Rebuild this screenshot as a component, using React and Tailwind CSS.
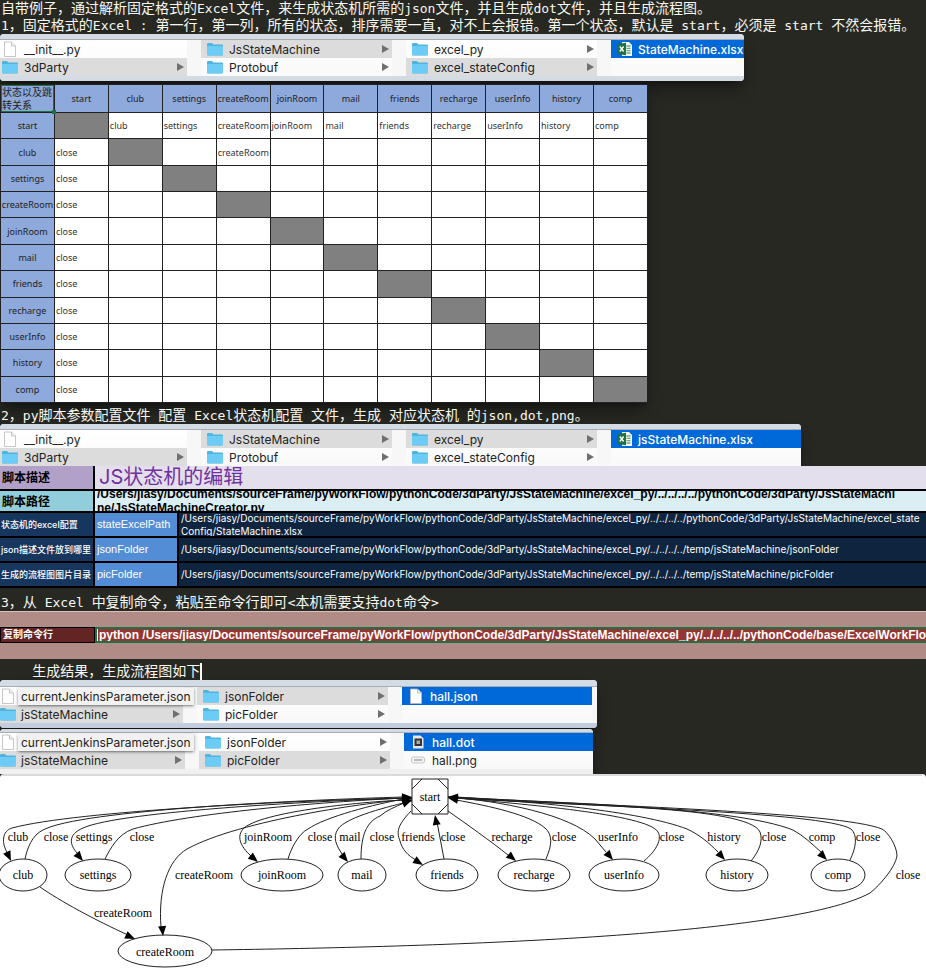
import React from "react";

const STATES = [
  "start", "club", "settings", "createRoom", "joinRoom", "mail",
  "friends", "recharge", "userInfo", "history", "comp",
];

/* Latin runs are set one pixel smaller than the Chinese text around them. */
function EditorLine({ children, className = "" }) {
  const parts = children.split(/([\x20-\x7e]+)/);
  return (
    <p className={`whitespace-pre pl-px font-['DejaVu_Sans_Mono','Noto_Sans_CJK_SC',monospace] text-[14px] leading-[17px] text-[#f8f8f2] ${className}`}>
      {parts.map((part, i) =>
        i % 2 ? <span key={i} className="text-[13px]">{part}</span> : part
      )}
    </p>
  );
}

function FolderIcon() {
  return (
    <svg viewBox="0 0 16 14" className="h-[14px] w-4 shrink-0">
      <path d="M0 2.2Q0 1 1.2 1H5l1.4 1.4h8.400Q16 2.400 16 3.600V12.400Q16 13.400 14.800 13.400H1.200Q0 13.400 0 12.400Z" fill="#4fb4de" />
      <path d="M0 4h16v8.400Q16 13.200 14.800 13.200H1.200Q0 13.200 0 12.400Z" fill="#6cccf6" />
    </svg>
  );
}

function FileIcon() {
  return (
    <svg viewBox="0 0 16 16" className="h-4 w-4 shrink-0">
      <path d="M2.500 1h7l4 4v10.500h-11Z" fill="#fff" stroke="#b9b9b9" strokeWidth="0.800" />
      <path d="M9.500 1v4h4" fill="#eee" stroke="#b9b9b9" strokeWidth="0.800" />
    </svg>
  );
}

function ExcelIcon() {
  return (
    <svg viewBox="0 0 16 16" className="h-4 w-4 shrink-0">
      <path d="M5 1h7l3 3v11H5Z" fill="#f4faf4" />
      <path d="M9.500 5h4M9.500 7.300h4M9.500 9.600h4M9.500 12h4" stroke="#6aa884" strokeWidth="1.300" />
      <path d="M0.500 3 9 1.800v12.400L0.500 13Z" fill="#1e7145" />
      <path d="M2.800 5.500 6.600 10.500M6.600 5.500 2.800 10.500" stroke="#fff" strokeWidth="1.400" />
    </svg>
  );
}

function DotIcon() {
  return (
    <svg viewBox="0 0 16 16" className="h-4 w-4 shrink-0">
      <path d="M3 1.500h7.500l3 3V14.500H3Z" fill="#e8e8e8" />
      <path d="M4.500 4.500h7.500v7.500H4.500Z" fill="#333" />
      <path d="M6.500 6.500h3.500v3.500H6.500Z" fill="#aaa" />
    </svg>
  );
}

function PngIcon() {
  return (
    <svg viewBox="0 0 16 16" className="h-4 w-4 shrink-0">
      <rect x="1.500" y="5" width="13" height="6" rx="2" fill="#f4f4f4" stroke="#c4c4c4" />
      <path d="M4 8h8" stroke="#aaa" strokeWidth="1.300" />
    </svg>
  );
}

const ICONS = { folder: FolderIcon, file: FileIcon, excel: ExcelIcon, dot: DotIcon, png: PngIcon };

function Entry({ icon, name, tone = "", arrow, tip, inset, gap }) {
  const Icon = ICONS[icon];
  const tones = {
    open: "bg-[#dcdcdc] text-[#222]",
    picked: "bg-[#0069d9] font-medium text-white",
    "": "text-[#222]",
  };
  return (
    <li className={`flex h-[18px] items-center whitespace-nowrap text-[12px] leading-[17px] ${inset} ${gap} ${tones[tone]}`}>
      <Icon />
      {tip ? (
        <span className="relative -mx-[3px] bg-[#f2f2f2] px-[3px] shadow shadow-black/40">{name}</span>
      ) : (
        <span>{name}</span>
      )}
      {arrow && (
        <svg viewBox="0 0 7 8" className="mr-[3px] ml-auto h-2 w-[7px] shrink-0">
          <path d="M0 0 7 4 0 8Z" fill="#6f6f6f" />
        </svg>
      )}
    </li>
  );
}

function Finder({ columns, className, title = "h-[6px]", foot = "" }) {
  return (
    <section className={`max-w-full overflow-hidden bg-[#f7f7f7] font-[Inter,sans-serif] shadow-lg shadow-black/40 ${className}`}>
      <div className={`border-b border-[#a9adb1] bg-[#d3dce5] ${title}`} />
      <div className="flex">
        {columns.map((col, i) => (
          <ul key={i} className={`shrink-0 bg-gradient-to-b from-white to-[#f9f9f9] ${col.width} ${i ? "ml-[14px]" : ""}`}>
            {col.items.map((item) => (
              <Entry key={item.name} inset={col.inset} gap={col.gap} {...item} />
            ))}
          </ul>
        ))}
      </div>
      <div className={foot} />
    </section>
  );
}

function sourceColumns(openPy, fileName, lastWidth) {
  return [
    { width: "w-[187px]", inset: "pl-[2px]", gap: "gap-[6px]", items: [
      { icon: "file", name: "__init__.py" },
      { icon: "folder", name: "3dParty", tone: "open", arrow: true },
    ] },
    { width: "w-[191px]", inset: "pl-[6px]", gap: "gap-[6px]", items: [
      { icon: "folder", name: "JsStateMachine", tone: "open", arrow: true },
      { icon: "folder", name: "Protobuf", arrow: true },
    ] },
    { width: "w-[191px]", inset: "pl-[6px]", gap: "gap-[6px]", items: [
      { icon: "folder", name: "excel_py", arrow: true, tone: openPy ? "open" : "" },
      { icon: "folder", name: "excel_stateConfig", arrow: true, tone: openPy ? "" : "open" },
    ] },
    { width: lastWidth, inset: "pl-[6px]", gap: "gap-[5px]", items: [
      { icon: "excel", name: fileName, tone: "picked" },
    ] },
  ];
}

function resultColumns(openPic, firstWidth, lastItems) {
  return [
    { width: firstWidth, inset: "pl-0", gap: "gap-[5px]", items: [
      { icon: "file", name: "currentJenkinsParameter.json", tip: true },
      { icon: "folder", name: "jsStateMachine", tone: "open", arrow: true },
    ] },
    { width: "w-[191px]", inset: "pl-[6px]", gap: "gap-[6px]", items: [
      { icon: "folder", name: "jsonFolder", arrow: true, tone: openPic ? "" : "open" },
      { icon: "folder", name: "picFolder", arrow: true, tone: openPic ? "open" : "" },
    ] },
    { width: "w-[190px]", inset: "pl-[6px]", gap: "gap-[6px]", items: lastItems },
  ];
}

function cellText(row, col) {
  if (row === 0 && col > 0) return STATES[col];
  if (row > 0 && col === 0) return "close";
  if (row === 1 && col === 3) return "createRoom";
  return "";
}

function StateTable() {
  return (
    <table className="h-[319px] w-[648px] max-w-full table-fixed border-collapse overflow-hidden bg-white font-['Noto_Sans','Noto_Sans_CJK_SC',sans-serif] text-[9px] leading-[13px] text-[#333] shadow-lg shadow-black/40">
      <thead>
        <tr className="h-7 bg-[#8ea9db] text-[#222]">
          <th className="relative border border-[#222] p-0 pl-px text-left text-[10px] font-normal">
            状态以及跳转关系
            <span className="absolute inset-0 border border-[#1e7145]" />
            <span className="absolute -right-[2px] -bottom-[2px] h-1 w-1 bg-[#1e7145]" />
          </th>
          {STATES.map((s) => (
            <th key={s} scope="col" className="border border-[#222] p-0 font-normal whitespace-nowrap">{s}</th>
          ))}
        </tr>
      </thead>
      <tbody>
        {STATES.map((s, row) => (
          <tr key={s}>
            <th scope="row" className="border border-[#222] bg-[#8ea9db] p-0 font-normal whitespace-nowrap text-[#222]">{s}</th>
            {STATES.map((t, col) => (
              <td key={t} className={`border border-[#222] p-0 pl-px whitespace-nowrap ${row === col ? "bg-[#808080]" : ""}`}>
                {cellText(row, col)}
              </td>
            ))}
          </tr>
        ))}
      </tbody>
    </table>
  );
}

const ROOT = "/Users/jiasy/Documents/sourceFrame/pyWorkFlow/pythonCode/3dParty/JsStateMachine/excel_py/../../../../";

const PARAMS = [
  ["状态机的excel配置", "stateExcelPath", [ROOT + "pythonCode/3dParty/JsStateMachine/excel_state", "Config/StateMachine.xlsx"]],
  ["json描述文件放到哪里", "jsonFolder", [ROOT + "temp/jsStateMachine/jsonFolder"]],
  ["生成的流程图图片目录", "picFolder", [ROOT + "temp/jsStateMachine/picFolder"]],
];

function ParamTable() {
  return (
    <table className="w-full table-fixed border-collapse border-b border-black bg-black font-[Inter,'Noto_Sans_CJK_SC',sans-serif] text-[10px] leading-[13px] text-white">
      <colgroup>
        <col className="w-[94px]" />
        <col className="w-[84px]" />
        <col />
      </colgroup>
      <tbody>
        <tr className="text-black">
          <th scope="row" className="border-r-2 border-b-2 border-black bg-[#b1a0c7] p-0 pl-[2px] text-left text-[12px] font-bold">脚本描述</th>
          <td colSpan={2} className="border-b-2 border-black bg-[#e4dfec] p-0 pl-1">
            <div className="flex h-[23px] items-center overflow-hidden text-[20px] text-[#7030a0]">JS状态机的编辑</div>
          </td>
        </tr>
        <tr className="text-black">
          <th scope="row" className="border-r-2 border-b-2 border-black bg-[#92cddc] p-0 pl-[2px] text-left text-[12px] font-bold">脚本路径</th>
          <td colSpan={2} className="border-b-2 border-black bg-[#daeef3] p-0 pl-[2px]">
            <div className="flex h-[20px] flex-col justify-center overflow-hidden font-['Liberation_Sans',sans-serif] text-[12px] leading-[14px] font-bold whitespace-nowrap">
              <span>{ROOT}pythonCode/3dParty/JsStateMachi</span>
              <span>ne/JsStateMachineCreator.py</span>
            </div>
          </td>
        </tr>
        {PARAMS.map(([label, key, lines]) => (
          <tr key={key}>
            <th scope="row" className="border-r-2 border-b-2 border-black bg-[#17365d] p-0 pl-px text-left text-[9px] font-medium whitespace-nowrap">{label}</th>
            <td className="border-r-2 border-b-2 border-black bg-[#538dd5] p-0 pl-[2px] font-['Liberation_Sans',sans-serif] text-[11px]">{key}</td>
            <td className="border-b-2 border-black bg-[#0f243e] p-0 pl-[2px]">
              <div className="flex h-[23px] flex-col justify-center overflow-hidden whitespace-nowrap">
                {lines.map((l) => <span key={l}>{l}</span>)}
              </div>
            </td>
          </tr>
        ))}
      </tbody>
    </table>
  );
}

function CommandRow() {
  return (
    <section className="border-t border-[#d8c2bf] bg-[#b18b85] pt-[15px] pb-4 font-['Liberation_Sans','Noto_Sans_CJK_SC',sans-serif] text-[12px] leading-[12px] font-bold text-white">
      <div className="flex h-4">
        <div className="flex w-[95px] shrink-0 items-center border border-black bg-[#632523] pl-[2px] text-[10px]">复制命令行</div>
        <div className="flex min-w-0 flex-1 items-center overflow-hidden border-2 border-r-0 border-[#1e7145] bg-[#963634] whitespace-nowrap">
          <span className="border-l border-white pl-px">
            python {ROOT}pythonCode/base/ExcelWorkFlow.py
          </span>
        </div>
      </div>
    </section>
  );
}

const NODES = [
  ["club", 23, 24], ["settings", 98, 33], ["joinRoom", 282, 41], ["mail", 362, 24],
  ["friends", 447, 31], ["recharge", 534, 36], ["userInfo", 624, 35],
  ["history", 737, 31], ["comp", 838, 27],
];

const LABELS = [
  ["club", 18], ["close", 56], ["settings", 94], ["close", 142], ["joinRoom", 268],
  ["close", 320], ["mail", 350], ["close", 382], ["friends", 418], ["close", 453],
  ["recharge", 512], ["close", 564], ["userInfo", 618], ["close", 672],
  ["history", 724], ["close", 774], ["comp", 822], ["close", 868],
];

const EDGES = [
  "M412 798C300 800 75 811 12 828C2 831 1 843 8 854",
  "M25 859C27 849 32 835 43 830C80 810 300 800 404 797",
  "M412 798C330 800 120 811 83 828C67 835 70 845 77 853",
  "M105 859C110 849 118 834 133 829C190 813 320 802 404 798",
  "M412 799C370 802 240 820 187 849C168 860 158 890 161 927",
  "M412 800C380 800 265 810 244 828C236 836 240 846 251 856",
  "M288 859C291 849 298 834 308 829C325 817 375 804 404 799",
  "M412 801C390 806 346 817 338 829C332 838 337 846 342 854",
  "M361 859C361 836 366 822 380 816C387 810 395 807 404 803",
  "M411 811C398 825 396 831 400 841C402 849 408 856 416 860",
  "M444 859L437 822",
  "M448 811C465 823 492 842 508 855",
  "M546 859C552 845 553 835 545 828C530 815 490 806 456 800",
  "M448 797C500 801 570 814 595 839L606 852",
  "M644 861C657 850 662 839 658 832C648 814 520 804 456 798",
  "M448 797C530 801 640 811 687 829C700 835 709 843 718 852",
  "M751 861C760 850 763 840 760 832C748 806 580 806 456 798",
  "M448 797C560 803 735 807 793 830C804 836 812 844 821 852",
  "M850 860C856 848 858 835 851 829C825 812 580 806 456 798",
  "M212 950C430 947 790 937 870 893C880 885 895 868 897 856C897 846 888 832 882 829C840 812 600 806 456 797",
  "M40 887C60 901 95 920 128 935",
];

/* Arrow heads: tip position and heading in degrees. */
const HEADS = [
  [11, 861, 65], [83, 861, 50], [163, 936, 85], [258, 862, 40], [348, 862, 50],
  [423, 865, 32], [435, 815, -100], [516, 861, 40], [613, 860, 50], [725, 860, 48],
  [827, 860, 45], [135, 939, 25], [412, 797, -2], [412, 798, -8], [412, 800, -22],
  [448, 797, 183], [448, 798, 190],
];

function StateGraph() {
  return (
    <svg viewBox="0 774 926 195" className="block w-full rounded-t bg-white font-['Liberation_Serif',serif] text-[12px]">
      <path d="M0 775H922" stroke="#b5b5b5" />
      <g fill="none" stroke="#222">
        {EDGES.map((d) => <path key={d} d={d} />)}
        {NODES.map(([name, x, rx]) => <ellipse key={name} cx={x} cy="875" rx={rx} ry="16" />)}
        <ellipse cx="165" cy="951" rx="47" ry="16" />
        <path d="M412 779h36v35h-36ZM412 789 422 779M438 779 448 789M412 804 422 814M438 814 448 804" />
      </g>
      {HEADS.map(([x, y, a]) => (
        <path key={`${x} ${y}`} d="M0 0-10-4V4Z" transform={`translate(${x} ${y}) rotate(${a})`} fill="#000" />
      ))}
      <g textAnchor="middle" fill="#000">
        <text x="430" y="801">start</text>
        {NODES.map(([name, x]) => <text key={name} x={x} y="879">{name}</text>)}
        {LABELS.map(([name, x]) => <text key={x} x={x} y="841">{name}</text>)}
        <text x="165" y="956">createRoom</text>
        <text x="204" y="879">createRoom</text>
        <text x="123" y="917">createRoom</text>
        <text x="908" y="879">close</text>
      </g>
    </svg>
  );
}

export default function App() {
  return (
    <main className="min-h-screen overflow-hidden bg-[#272822]">
      <EditorLine>自带例子，通过解析固定格式的Excel文件，来生成状态机所需的json文件，并且生成dot文件，并且生成流程图。</EditorLine>
      <EditorLine>1，固定格式的Excel : 第一行，第一列，所有的状态，排序需要一直，对不上会报错。第一个状态，默认是 start，必须是 start 不然会报错。</EditorLine>
      <Finder
        className="mb-[3px] w-[744px] rounded"
        columns={sourceColumns(false, "StateMachine.xlsx", "w-[133px]")}
        foot="h-[5px] bg-[#d3dce5]"
      />
      <StateTable />
      <EditorLine className="pt-1">2，py脚本参数配置文件 配置 Excel状态机配置 文件，生成 对应状态机 的json,dot,png。</EditorLine>
      <Finder
        className="w-[801px] rounded-t"
        columns={sourceColumns(true, "jsStateMachine.xlsx", "w-[190px]")}
      />
      <ParamTable />
      <EditorLine className="pt-[6px]">3，从 Excel 中复制命令，粘贴至命令行即可&lt;本机需要支持dot命令&gt;</EditorLine>
      <CommandRow />
      <div className="flex pt-1">
        <EditorLine>{"    生成结果，生成流程图如下"}</EditorLine>
        <span className="w-[2px] bg-[#f8f8f0]" />
      </div>
      <Finder
        className="mb-px w-[597px] rounded"
        columns={resultColumns(false, "w-[183px]", [{ icon: "file", name: "hall.json", tone: "picked" }])}
        title="h-[7px]"
        foot="h-[5px] bg-[#c3cddd]"
      />
      <Finder
        className="w-[593px] rounded-t"
        title="h-1"
        columns={resultColumns(true, "w-[185px]", [
          { icon: "dot", name: "hall.dot", tone: "picked" },
          { icon: "png", name: "hall.png" },
        ])}
        foot="h-[5px] bg-[#f0f0f0]"
      />
      <StateGraph />
    </main>
  );
}
